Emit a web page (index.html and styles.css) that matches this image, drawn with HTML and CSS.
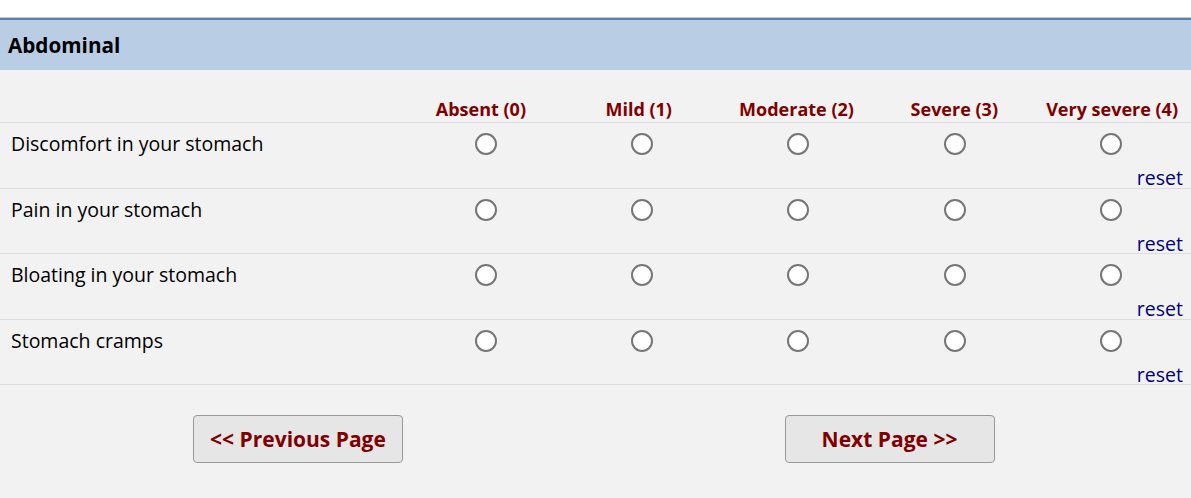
FILE: index.html
```html
<!DOCTYPE html>
<html lang="en">
<head>
    <meta charset="UTF-8">
    <meta name="viewport" content="width=device-width, initial-scale=1.0">
    <title>Abdominal</title>
    <link rel="stylesheet" href="styles.css">
</head>
<body>
    <div class="page">
        <div class="section-header">Abdominal</div>

        <div class="matrix">
            <div class="matrix-head">
                <div></div>
                <div class="choice-label">Absent (0)</div>
                <div class="choice-label">Mild (1)</div>
                <div class="choice-label">Moderate (2)</div>
                <div class="choice-label">Severe (3)</div>
                <div class="choice-label">Very severe (4)</div>
            </div>

            <div class="matrix-row">
                <div class="question">Discomfort in your stomach</div>
                <div class="choice"><input type="radio" name="q1" value="0"></div>
                <div class="choice"><input type="radio" name="q1" value="1"></div>
                <div class="choice"><input type="radio" name="q1" value="2"></div>
                <div class="choice"><input type="radio" name="q1" value="3"></div>
                <div class="choice"><input type="radio" name="q1" value="4"></div>
                <a class="reset" href="#">reset</a>
            </div>

            <div class="matrix-row">
                <div class="question">Pain in your stomach</div>
                <div class="choice"><input type="radio" name="q2" value="0"></div>
                <div class="choice"><input type="radio" name="q2" value="1"></div>
                <div class="choice"><input type="radio" name="q2" value="2"></div>
                <div class="choice"><input type="radio" name="q2" value="3"></div>
                <div class="choice"><input type="radio" name="q2" value="4"></div>
                <a class="reset" href="#">reset</a>
            </div>

            <div class="matrix-row">
                <div class="question">Bloating in your stomach</div>
                <div class="choice"><input type="radio" name="q3" value="0"></div>
                <div class="choice"><input type="radio" name="q3" value="1"></div>
                <div class="choice"><input type="radio" name="q3" value="2"></div>
                <div class="choice"><input type="radio" name="q3" value="3"></div>
                <div class="choice"><input type="radio" name="q3" value="4"></div>
                <a class="reset" href="#">reset</a>
            </div>

            <div class="matrix-row">
                <div class="question">Stomach cramps</div>
                <div class="choice"><input type="radio" name="q4" value="0"></div>
                <div class="choice"><input type="radio" name="q4" value="1"></div>
                <div class="choice"><input type="radio" name="q4" value="2"></div>
                <div class="choice"><input type="radio" name="q4" value="3"></div>
                <div class="choice"><input type="radio" name="q4" value="4"></div>
                <a class="reset" href="#">reset</a>
            </div>
        </div>

        <div class="nav-buttons">
            <div class="nav-cell"><button class="nav-btn">&lt;&lt; Previous Page</button></div>
            <div class="nav-cell"><button class="nav-btn">Next Page &gt;&gt;</button></div>
        </div>
    </div>
</body>
</html>
```

FILE: styles.css
```css
body {
    font-family: "Open Sans", "DejaVu Sans", sans-serif;
    margin: 0;
    padding: 0;
    background-color: #fff;
}

.page {
    margin-top: 17px;
    border-top: 1px solid #c8c8c8;
    background-color: #f2f2f2;
    min-height: 480px;
}

.section-header {
    background-color: #b9cde5;
    border-top: 2px solid #5f7ea8;
    height: 50px;
    display: flex;
    align-items: center;
    padding-left: 8px;
    font-size: 20.7px;
    font-weight: bold;
    color: #000;
}

.matrix-head,
.matrix-row {
    display: grid;
    grid-template-columns: 408px repeat(5, 1fr);
    padding-right: 2px;
}

.matrix-head {
    grid-template-columns: 402px repeat(5, 1fr);
    padding-right: 0;
    height: 52px;
    align-items: end;
    border-bottom: 1px solid #dcdcdc;
}

.choice-label {
    text-align: center;
    font-size: 18px;
    font-weight: bold;
    color: #800000;
    line-height: 22px;
    padding-bottom: 2px;
}

.matrix-row {
    grid-template-rows: 22px 19.5px;
    row-gap: 13px;
    padding-top: 10px;
    border-bottom: 1px solid #dcdcdc;
}

.question {
    font-size: 19.5px;
    color: #000;
    padding-left: 11px;
    line-height: 22px;
}

.choice {
    display: flex;
    justify-content: center;
}

.choice input {
    appearance: none;
    -webkit-appearance: none;
    width: 22px;
    height: 22px;
    margin: 0;
    border: 2px solid #767676;
    border-radius: 50%;
    background-color: #fff;
}

.reset {
    grid-column: 6;
    grid-row: 2;
    justify-self: end;
    padding-right: 6px;
    font-size: 19.5px;
    line-height: 19.5px;
    color: #000080;
    text-decoration: none;
}

.nav-buttons {
    display: grid;
    grid-template-columns: 596px 1fr;
    padding-top: 30px;
    padding-right: 8px;
}

.nav-cell {
    display: flex;
    justify-content: center;
}

.nav-btn {
    font-family: "Open Sans", "DejaVu Sans", sans-serif;
    width: 210px;
    height: 48px;
    background-color: #e6e6e6;
    border: 1px solid #999;
    border-radius: 4px;
    font-size: 21px;
    font-weight: bold;
    color: #800000;
    cursor: pointer;
}
```
